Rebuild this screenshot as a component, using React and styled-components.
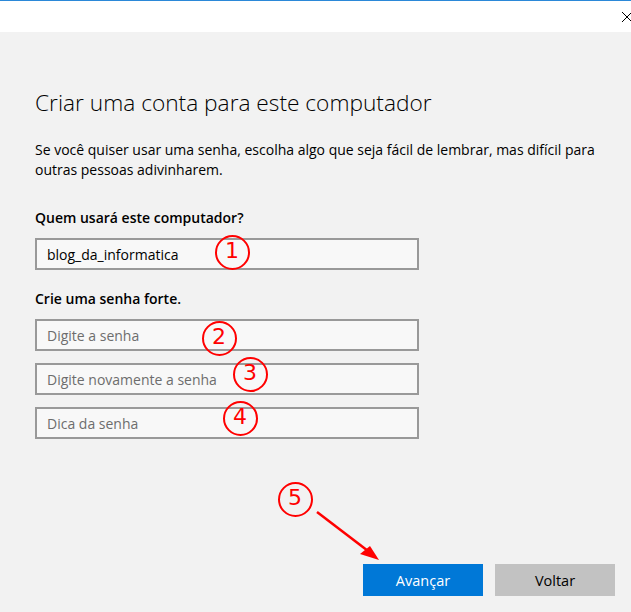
import React from "react";
import styled, { createGlobalStyle } from "styled-components";

const GlobalStyle = createGlobalStyle`
  html, body {
    margin: 0;
    padding: 0;
    background: #f2f2f2;
  }
  body {
    font-family: "Open Sans", "Noto Sans", sans-serif;
    color: #000;
  }
`;

const Window = styled.div`
  position: relative;
  width: 631px;
  height: 612px;
  display: flex;
  flex-direction: column;
  overflow: hidden;
`;

const TitleBar = styled.div`
  height: 31px;
  background: #ffffff;
  border-top: 1px solid #2b88d8;
  display: flex;
  justify-content: flex-end;
  align-items: flex-start;
`;

const CloseButton = styled.button`
  border: none;
  background: transparent;
  padding: 0;
  margin: 10px -2px 0 0;
  width: 12px;
  height: 12px;
  display: flex;
`;

const Body = styled.main`
  flex: 1;
  background: #f2f2f2;
  display: flex;
  flex-direction: column;
  padding: 56px 16px 16px 35px;
`;

const Title = styled.h1`
  margin: 0;
  font-size: 22.7px;
  font-weight: 300;
  line-height: 30px;
  color: #000;
`;

const Description = styled.p`
  margin: 22px 0 0;
  font-size: 14px;
  line-height: 20px;
  max-width: 570px;
`;

const Label = styled.div`
  margin: ${(p) => p.$top}px 0 10px;
  font-size: 14px;
  font-weight: 600;
  line-height: 20px;
`;

const Fields = styled.div`
  display: flex;
  flex-direction: column;
  gap: 12px;
`;

const Field = styled.div`
  box-sizing: border-box;
  width: 384px;
  height: 32px;
  border: 2px solid #999999;
  background: #f8f8f8;
  padding: 0 10px;
  display: flex;
  align-items: center;
  font-size: 14px;
  color: ${(p) => (p.$placeholder ? "#6d6d6d" : "#000")};
`;

const Spacer = styled.div`
  flex: 1;
`;

const ButtonRow = styled.div`
  display: flex;
  justify-content: flex-end;
  gap: 12px;
`;

const Button = styled.button`
  width: 120px;
  height: 32px;
  border: none;
  font-family: inherit;
  font-size: 14.5px;
  font-weight: 400;
  background: ${(p) => (p.$primary ? "#0078d7" : "#c2c2c2")};
  color: ${(p) => (p.$primary ? "#ffffff" : "#000000")};
`;

const Marker = styled.div`
  position: absolute;
  box-sizing: border-box;
  width: 35px;
  height: 35px;
  border: 2.5px solid #ff0000;
  border-radius: 50%;
  color: #ff0000;
  font-size: 22px;
  line-height: 28px;
  text-align: center;
  font-family: "DejaVu Sans", sans-serif;
`;

const ArrowLayer = styled.svg`
  position: absolute;
  left: 0;
  top: 0;
  pointer-events: none;
`;

const markers = [
  { n: 1, x: 232, y: 252 },
  { n: 2, x: 219, y: 338 },
  { n: 3, x: 250, y: 374 },
  { n: 4, x: 240, y: 418 },
  { n: 5, x: 295, y: 499 },
];

export default function App() {
  return (
    <>
      <GlobalStyle />
      <Window>
        <TitleBar>
          <CloseButton aria-label="Fechar">
            <svg width="12" height="12" viewBox="0 0 12 12">
              <path d="M1 1 L11 11 M11 1 L1 11" stroke="#000" strokeWidth="1" />
            </svg>
          </CloseButton>
        </TitleBar>
        <Body>
          <Title>Criar uma conta para este computador</Title>
          <Description>
            Se você quiser usar uma senha, escolha algo que seja fácil de
            lembrar, mas difícil para outras pessoas adivinharem.
          </Description>
          <Label $top={28}>Quem usará este computador?</Label>
          <Field>blog_da_informatica</Field>
          <Label $top={19}>Crie uma senha forte.</Label>
          <Fields>
            <Field $placeholder>Digite a senha</Field>
            <Field $placeholder>Digite novamente a senha</Field>
            <Field $placeholder>Dica da senha</Field>
          </Fields>
          <Spacer />
          <ButtonRow>
            <Button $primary>Avançar</Button>
            <Button>Voltar</Button>
          </ButtonRow>
        </Body>

        {markers.map((m) => (
          <Marker
            key={m.n}
            style={{ left: m.x - 17.5, top: m.y - 17.5 }}
          >
            {m.n}
          </Marker>
        ))}
        <ArrowLayer width="631" height="612">
          <line
            x1="317"
            y1="512"
            x2="372"
            y2="554"
            stroke="#ff0000"
            strokeWidth="2.5"
          />
          <path d="M379 560 L360 554 L370 546 Z" fill="#ff0000" />
        </ArrowLayer>
      </Window>
    </>
  );
}
